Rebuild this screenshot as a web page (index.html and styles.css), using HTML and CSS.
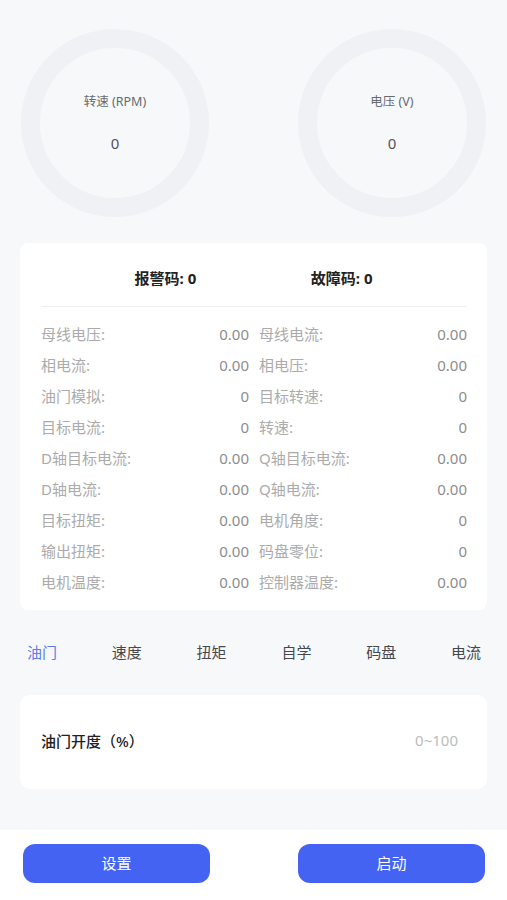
FILE: index.html
```html
<!DOCTYPE html>
<html lang="zh-CN">
<head>
<meta charset="utf-8">
<title>Motor</title>
<link rel="stylesheet" href="styles.css">
</head>
<body>
<div class="page">
  <div class="gauges">
    <div class="gauge">
      <div class="g-label">转速 (RPM)</div>
      <div class="g-value">0</div>
    </div>
    <div class="gauge">
      <div class="g-label">电压 (V)</div>
      <div class="g-value">0</div>
    </div>
  </div>

  <div class="card">
    <div class="codes">
      <span>报警码: 0</span>
      <span>故障码: 0</span>
    </div>
    <div class="divider"></div>
    <div class="grid">
      <div class="row"><span class="k">母线电压:</span><span class="v">0.00</span></div>
      <div class="row"><span class="k">母线电流:</span><span class="v">0.00</span></div>
      <div class="row"><span class="k">相电流:</span><span class="v">0.00</span></div>
      <div class="row"><span class="k">相电压:</span><span class="v">0.00</span></div>
      <div class="row"><span class="k">油门模拟:</span><span class="v">0</span></div>
      <div class="row"><span class="k">目标转速:</span><span class="v">0</span></div>
      <div class="row"><span class="k">目标电流:</span><span class="v">0</span></div>
      <div class="row"><span class="k">转速:</span><span class="v">0</span></div>
      <div class="row"><span class="k">D轴目标电流:</span><span class="v">0.00</span></div>
      <div class="row"><span class="k">Q轴目标电流:</span><span class="v">0.00</span></div>
      <div class="row"><span class="k">D轴电流:</span><span class="v">0.00</span></div>
      <div class="row"><span class="k">Q轴电流:</span><span class="v">0.00</span></div>
      <div class="row"><span class="k">目标扭矩:</span><span class="v">0.00</span></div>
      <div class="row"><span class="k">电机角度:</span><span class="v">0</span></div>
      <div class="row"><span class="k">输出扭矩:</span><span class="v">0.00</span></div>
      <div class="row"><span class="k">码盘零位:</span><span class="v">0</span></div>
      <div class="row"><span class="k">电机温度:</span><span class="v">0.00</span></div>
      <div class="row"><span class="k">控制器温度:</span><span class="v">0.00</span></div>
    </div>
  </div>

  <div class="tabs">
    <span class="tab active">油门</span>
    <span class="tab">速度</span>
    <span class="tab">扭矩</span>
    <span class="tab">自学</span>
    <span class="tab">码盘</span>
    <span class="tab">电流</span>
  </div>

  <div class="input-card">
    <span class="in-label">油门开度（%）</span>
    <span class="in-ph">0~100</span>
  </div>

  <div class="bottom">
    <button class="btn">设置</button>
    <button class="btn">启动</button>
  </div>
</div>
</body>
</html>
```

FILE: styles.css
```css
html, body {
  margin: 0;
  padding: 0;
  background: #f7f8fa;
  font-family: "Noto Sans", "Noto Sans CJK SC", sans-serif;
}
.page {
  width: 507px;
  min-height: 900px;
  display: flex;
  flex-direction: column;
}
.gauges {
  display: flex;
  justify-content: space-between;
  padding: 29px 21px 0 21px;
}
.gauge {
  width: 188px;
  height: 188px;
  box-sizing: border-box;
  border: 19px solid #eff1f4;
  border-radius: 50%;
  display: flex;
  flex-direction: column;
  align-items: center;
  padding-top: 45px;
}
.g-label {
  font-size: 12.5px;
  line-height: 18px;
  color: #666a70;
}
.g-value {
  margin-top: 23px;
  font-size: 15px;
  line-height: 18px;
  color: #50545a;
}
.card {
  margin: 26px 20px 0 20px;
  background: #ffffff;
  border-radius: 8px;
  padding-bottom: 12px;
}
.codes {
  display: flex;
  justify-content: space-evenly;
  padding: 25px 0 18px 0;
  font-size: 15px;
  line-height: 20px;
  font-weight: 700;
  color: #222222;
}
.divider {
  height: 1px;
  background: #eeeff1;
  margin: 0 20px 0 21px;
}
.grid {
  display: grid;
  grid-template-columns: 1fr 1fr;
  column-gap: 10px;
  padding: 12px 20px 0 21px;
}
.row {
  display: flex;
  justify-content: space-between;
  height: 31px;
  line-height: 31px;
  font-size: 15px;
}
.k {
  color: #ababab;
}
.v {
  color: #8d8d8d;
}
.tabs {
  display: flex;
  justify-content: space-between;
  padding: 0 26px 0 27px;
  margin-top: 32px;
  font-size: 15px;
  line-height: 20px;
}
.tab {
  color: #45484e;
}
.tab.active {
  color: #5b7bf0;
}
.input-card {
  margin: 33px 20px 0 20px;
  height: 94px;
  box-sizing: border-box;
  background: #ffffff;
  border-radius: 10px;
  display: flex;
  align-items: center;
  justify-content: space-between;
  padding: 0 29px 4px 21px;
}
.in-label {
  font-size: 15px;
  font-weight: 500;
  color: #222222;
}
.in-ph {
  font-size: 15px;
  color: #bcbcbc;
}
.bottom {
  margin-top: auto;
  height: 70px;
  background: #ffffff;
  display: flex;
  justify-content: space-between;
  align-items: flex-start;
  padding: 14px 22px 0 23px;
  box-sizing: border-box;
}
.btn {
  width: 187px;
  height: 39px;
  border: none;
  border-radius: 12px;
  background: #4563f2;
  color: #ffffff;
  font-family: "Noto Sans", "Noto Sans CJK SC", sans-serif;
  font-size: 15px;
  padding: 0 0 2px 0;
}
```
